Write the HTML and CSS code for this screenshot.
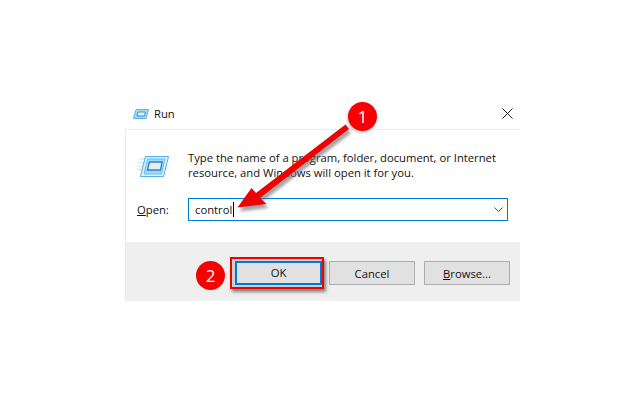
FILE: index.html
```html
<!DOCTYPE html>
<html lang="en">
<head>
<meta charset="utf-8">
<title>Run</title>
<link rel="stylesheet" href="styles.css">
</head>
<body>
<div class="dialog">
  <div class="titlebar">
    <svg class="run-icon-small" viewBox="0 0 16 10" width="16" height="10">
      <path d="M3 .5H15.5L13 9.5H.5Z" fill="#a6dbf7" stroke="#5db4ee" stroke-width="1"/>
      <path d="M5 3H12.5L11.5 7H4Z" fill="#e4eff8" stroke="#3d8fd2" stroke-width="1"/>
    </svg>
    <span class="title">Run</span>
    <svg class="close" viewBox="0 0 11 11" width="11" height="11">
      <path d="M.5.5L10.5 10.5M10.5.5L.5 10.5" stroke="#1a1a1a" stroke-width="1" fill="none"/>
    </svg>
  </div>
  <div class="panel">
    <div class="content">
      <div class="message-row">
        <svg class="run-icon" viewBox="0 0 32 21" width="32" height="21">
          <path d="M2 3H8M1 6.500H7M0 10H6M0 13.500H5" stroke="#bfe3f8" stroke-width="1" fill="none"/>
          <path d="M8.500 .5H31.500L26.500 20.500H3.500Z" fill="#dff1fc" stroke="#4fb0ee" stroke-width="1"/>
          <path d="M10.500 3H28L24.500 18H7Z" fill="#9fd8f8" stroke="#6cc0f2" stroke-width="1"/>
          <path d="M12.500 6H25L23.500 14H10.500Z" fill="#e8edf2" stroke="#2f80c4" stroke-width="1.300"/>
        </svg>
        <p class="message">Type the name of a program, folder, document, or Internet resource, and Windows will open it for you.</p>
      </div>
      <div class="open-row">
        <span class="open-label"><u>O</u>pen:</span>
        <div class="combo">
          <span class="combo-text">control</span><span class="caret"></span>
          <svg class="chevron" viewBox="0 0 9 5" width="9" height="5">
            <path d="M.5.5L4.500 4.500L8.500.5" stroke="#555" stroke-width="1" fill="none"/>
          </svg>
        </div>
      </div>
    </div>
    <div class="footer">
      <div class="ok-outline"><button class="btn btn-default">OK</button></div>
      <button class="btn">Cancel</button>
      <button class="btn"><u>B</u>rowse...</button>
    </div>
  </div>
</div>
<svg class="arrow" viewBox="0 0 644 401" width="644" height="401">
  <defs>
    <filter id="soft" x="-20%" y="-20%" width="140%" height="140%">
      <feGaussianBlur stdDeviation="1.500"/>
    </filter>
  </defs>
  <path d="M237.500 207.500L251.500 188L256 193L345.500 124.500L349 129L260 198L266.500 204Z" fill="#666" opacity=".6" filter="url(#soft)" transform="translate(2 4)"/>
  <path d="M237.500 207.500L251.500 188L256 193L345.500 124.500L349 129L260 198L266.500 204Z" fill="#f00000"/>
</svg>
<div class="badge badge-one">1</div>
<div class="badge badge-two">2</div>
</body>
</html>
```
FILE: styles.css
```css
* { box-sizing: border-box; }
html, body { margin: 0; padding: 0; background: #fff; }
body {
  position: relative;
  width: 644px;
  height: 401px;
  overflow: hidden;
  font-family: "Open Sans", "Noto Sans", sans-serif;
  font-size: 11.25px;
  color: #111;
}
.dialog {
  width: 395px;
  margin-left: 125px;
  padding-top: 99px;
}
.titlebar {
  display: flex;
  align-items: center;
  height: 30px;
  padding-left: 8px;
  padding-right: 7px;
  padding-bottom: 1px;
}
.run-icon-small { flex: none; }
.title { margin-left: 5px; }
.close { margin-left: auto; }
.panel {
  border-top: 1px solid #ececec;
  border-left: 1px solid #ececec;
  height: 172px;
  display: flex;
  flex-direction: column;
}
.content { flex: 1; padding: 20px 12px 0 10px; }
.message-row { display: flex; }
.run-icon { flex: none; margin: 6px 0 0 1px; }
.message {
  margin: 0 0 0 19px;
  width: 320px;
  line-height: 15px;
}
.open-row {
  display: flex;
  align-items: center;
  margin-top: 18px;
  margin-left: 1px;
}
.open-label { width: 51px; }
.combo {
  display: flex;
  align-items: center;
  width: 320px;
  height: 23px;
  border: 1px solid #0078d7;
  padding: 0 4px 0 6px;
}
.caret {
  display: inline-block;
  width: 1px;
  height: 15px;
  background: #000;
  margin-left: 1px;
}
.chevron { margin-left: auto; }
.footer {
  height: 59px;
  background: #efefef;
  display: flex;
  align-items: flex-start;
  padding: 19px 0 0 109px;
}
.ok-outline {
  border: 2px solid #f00000;
  padding: 2px 0 2px 3px;
  margin: -4px 5px 0 -5px;
  box-shadow: 2px 3px 3px rgba(0,0,0,.45);
  background: #cfcfcf;
  line-height: 0;
}
.btn {
  font: inherit;
  color: #111;
  width: 86px;
  height: 24px;
  padding: 0;
  margin-right: 9px;
  background: #e1e1e1;
  border: 1px solid #adadad;
}
.btn-default {
  margin: 0;
  width: 87px;
  border: 2px solid #0078d7;
}
.badge {
  position: absolute;
  width: 29px;
  height: 29px;
  border-radius: 50%;
  background: #f80000;
  color: #fff;
  font-size: 17px;
  line-height: 29px;
  text-align: center;
}
.badge-one { left: 348px; top: 102px; box-shadow: -1px 2px 3px rgba(0,0,0,.2); }
.badge-two { left: 196px; top: 261px; }
.arrow { position: absolute; left: 0; top: 0; }
```
